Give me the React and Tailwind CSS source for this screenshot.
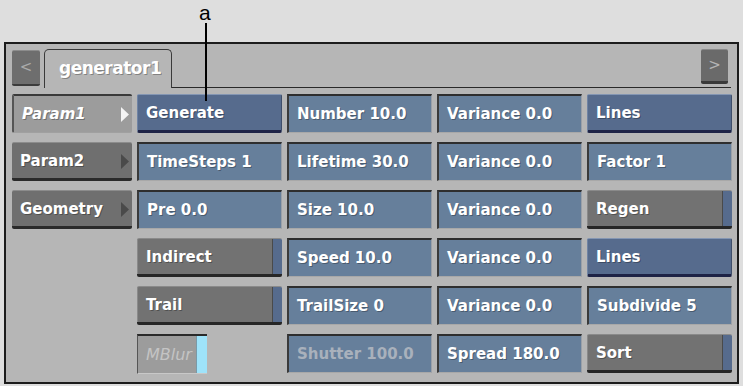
const base =
    "h-[39px] flex items-center pl-2 text-[15px] font-bold text-white [text-shadow:1px_1px_0_rgba(0,0,0,0.3)] whitespace-nowrap overflow-hidden"

// raised blue push button
const pushBlue =
    base + " bg-[#566b8d] border-t border-t-[#8496b3] border-l border-l-[#7084a4] border-r border-r-[#3f4e6a] border-b-[3px] border-b-[#1e2346] rounded-[2px] pt-[1px]"

// sunken numeric field
const field =
    base + " bg-[#667f9b] border-t-2 border-t-[#2e2e2e] border-l-2 border-l-[#3a3a3a] border-r border-r-[#9aa0a8] border-b border-b-[#a8a8a8]"

function Push({ label }) {
    return <div className={pushBlue}>{label}</div>
}

function Field({ label, dim }) {
    return <div className={field + (dim ? " !text-[#a9b1bc] [text-shadow:none]" : "")}>{label}</div>
}

function Toggle({ label }) {
    return (
        <div className="h-[39px] flex rounded-[2px] border-b-[3px] border-b-[#262626] border-t border-t-[#8a8a8a] overflow-hidden">
            <div className="flex-1 flex items-center pl-2 pt-[2px] bg-[#727272] border-l border-l-[#8a8a8a] text-[15px] font-bold text-white [text-shadow:1px_1px_0_rgba(0,0,0,0.3)]">
                {label}
            </div>
            <div className="w-[10px] bg-[#566b8d] border-l border-l-[#4a4a4a]" />
        </div>
    )
}

function SideTab({ label, active }) {
    return (
        <div
            className={
                "h-[39px] flex items-center justify-between pl-2 pr-[3px] text-[15px] font-bold text-white [text-shadow:1px_1px_0_rgba(0,0,0,0.3)] rounded-[2px] " +
                (active
                    ? "bg-[#9c9c9c] italic border-t-2 border-t-[#3a3a3a] border-l-2 border-l-[#555] border-b border-b-[#a0a0a0]"
                    : "bg-[#6f6f6f] border-t border-t-[#8c8c8c] border-b-[3px] border-b-[#2a2a2a] pt-[1px]")
            }
        >
            <span>{label}</span>
            <svg width="9" height="15" viewBox="0 0 9 15">
                <path d="M1 0 L9 7.5 L1 15 Z" fill={active ? '#f4f4f4' : '#4a4a4a'} />
            </svg>
        </div>
    )
}

function App() {
    return (
        <div className="relative w-[743px] h-[386px] bg-[#dedede] [font-family:'DejaVu_Sans',sans-serif] overflow-hidden">
            {/* callout */}
            <div className="absolute left-[199px] top-[-3px] text-[21px] text-black [font-family:'Liberation_Sans',sans-serif]">a</div>
            <div className="absolute left-[205px] top-[23px] w-[2px] h-[78px] bg-black z-10" />

            <div className="pt-[42px] px-[4px]">
                <div className="h-[342px] bg-[#b6b6b6] border-2 border-[#1c1c1c] px-[6px] pt-[4px]">
                    {/* tab bar */}
                    <div className="flex items-end h-[40px]">
                        <div className="w-[28px] h-[36px] mb-[2px] flex items-center justify-center bg-[#6e6e6e] border-t border-t-[#8c8c8c] border-b-[2px] border-b-[#3c3c3c] rounded-[2px] text-[#aaaaaa] text-[15px]">
                            &lt;
                        </div>
                        <div className="ml-[4px] w-[128px] h-[39px] flex items-center pl-[14px] border-t border-l border-r border-[#3a3a3a] rounded-t-[5px] text-[17px] font-bold text-white [text-shadow:1px_1px_0_rgba(0,0,0,0.3)] tracking-[-0.5px]">
                            generator1
                        </div>
                        <div className="flex-1 h-full flex items-start justify-end border-b border-b-[#2a2a2a]">
                            <div className="mt-[1px] mr-[3px] w-[27px] h-[35px] flex items-center justify-center bg-[#6a6a6a] border-t border-t-[#888] border-b-[3px] border-b-[#3a3a3a] rounded-[2px] text-[#b4b4b4] text-[15px]">
                                &gt;
                            </div>
                        </div>
                    </div>

                    {/* parameter grid */}
                    <div className="mt-[6px] grid grid-cols-[120px_145px_145px_145px_145px] gap-x-[5px] gap-y-[9px]">
                        <SideTab label="Param1" active />
                        <Push label="Generate" />
                        <Field label="Number 10.0" />
                        <Field label="Variance 0.0" />
                        <Push label="Lines" />

                        <SideTab label="Param2" />
                        <Field label="TimeSteps 1" />
                        <Field label="Lifetime 30.0" />
                        <Field label="Variance 0.0" />
                        <Field label="Factor 1" />

                        <SideTab label="Geometry" />
                        <Field label="Pre 0.0" />
                        <Field label="Size 10.0" />
                        <Field label="Variance 0.0" />
                        <Toggle label="Regen" />

                        <div />
                        <Toggle label="Indirect" />
                        <Field label="Speed 10.0" />
                        <Field label="Variance 0.0" />
                        <Push label="Lines" />

                        <div />
                        <Toggle label="Trail" />
                        <Field label="TrailSize 0" />
                        <Field label="Variance 0.0" />
                        <Field label="Subdivide 5" />

                        <div />
                        <div className="w-[70px] h-[40px] relative flex items-center pl-2 bg-[#9c9c9c] border-t-2 border-t-[#2a2a2a] border-l border-l-[#555] border-b border-b-[#c8c8c8] overflow-hidden">
                            <span className="text-[16px] italic text-[#c4c4c4]">MBlur</span>
                            <div className="absolute right-0 top-0 bottom-0 w-[11px] bg-[#9ee3fa] border-l border-l-[#7a9aa8]" />
                        </div>
                        <Field label="Shutter 100.0" dim />
                        <Field label="Spread 180.0" />
                        <Toggle label="Sort" />
                    </div>
                </div>
            </div>
        </div>
    )
}

export default App
